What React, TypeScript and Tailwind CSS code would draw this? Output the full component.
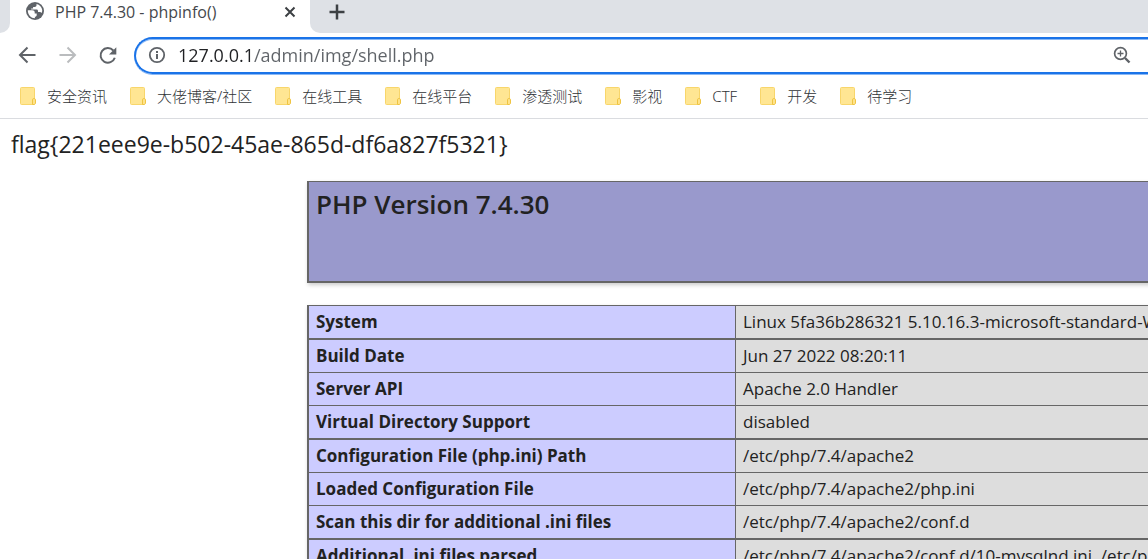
const bookmarks = ["安全资讯", "大佬博客/社区", "在线工具", "在线平台", "渗透测试", "影视", "CTF", "开发", "待学习"];

type Row = { name: string; value: string; heavy?: boolean };

const rows: Row[] = [
  { name: "System", value: "Linux 5fa36b286321 5.10.16.3-microsoft-standard-WSL2", heavy: true },
  { name: "Build Date", value: "Jun 27 2022 08:20:11" },
  { name: "Server API", value: "Apache 2.0 Handler" },
  { name: "Virtual Directory Support", value: "disabled", heavy: true },
  { name: "Configuration File (php.ini) Path", value: "/etc/php/7.4/apache2" },
  { name: "Loaded Configuration File", value: "/etc/php/7.4/apache2/php.ini" },
  { name: "Scan this dir for additional .ini files", value: "/etc/php/7.4/apache2/conf.d", heavy: true },
  { name: "Additional .ini files parsed", value: "/etc/php/7.4/apache2/conf.d/10-mysqlnd.ini, /etc/php/7.4/apache2/conf.d/10-opcache.ini" },
];

function GlobeIcon() {
  return (
    <svg width="20" height="20" viewBox="0 0 20 20" aria-hidden="true">
      <circle cx="10" cy="10" r="9" fill="#5f6368" />
      <path
        d="M2.8 9.2h4.4c1.6 0 2.5.9 2.5 2.1v1.1h2v1.9c0 .9-.8 1.5-1.8 1.5v1.4C6 17.200 2.800 13.700 2.800 9.200zM11.500 2.900v1.300c0 1-.8 1.700-1.800 1.700H8.100v1.700H6.200v.8h5.300c1 0 1.500.7 1.500 1.500v1h1.600c.9 0 1.500.5 1.800 1.200.8-1 .9-2 .8-3-.3-3-2.500-5.500-5.700-6.200z"
        fill="#fff"
      />
    </svg>
  );
}

function BackIcon() {
  return (
    <svg width="24" height="24" viewBox="0 0 24 24" fill="none" stroke="currentColor" strokeWidth="2" aria-hidden="true">
      <path d="M19.500 11H5M11.500 3.500L4 11l7.500 7.500" />
    </svg>
  );
}

function ForwardIcon() {
  return (
    <svg width="24" height="24" viewBox="0 0 24 24" fill="none" stroke="currentColor" strokeWidth="2" aria-hidden="true">
      <path d="M3.500 11H18M11.500 3.500L19 11l-7.500 7.500" />
    </svg>
  );
}

function ReloadIcon() {
  return (
    <svg width="24" height="24" viewBox="0 0 24 24" aria-hidden="true">
      <path d="M18.800 13.700A7.300 7.300 0 1 1 17.300 6.500" fill="none" stroke="currentColor" strokeWidth="2" />
      <path d="M20.300 3.200v7.300H13z" fill="currentColor" />
    </svg>
  );
}

function InfoIcon() {
  return (
    <svg width="18" height="18" viewBox="0 0 18 18" aria-hidden="true">
      <circle cx="9" cy="9" r="7.200" fill="none" stroke="currentColor" strokeWidth="1.800" />
      <path d="M8 8h2v5H8zM8 5h2v1.900H8z" fill="currentColor" />
    </svg>
  );
}

function ZoomIcon() {
  return (
    <svg width="18" height="18" viewBox="0 0 18 18" fill="none" stroke="currentColor" aria-hidden="true">
      <circle cx="7.500" cy="7.500" r="5.900" strokeWidth="1.700" />
      <path d="M12 12l4.500 4.500" strokeWidth="2.400" />
      <path d="M4.500 7.500h6M7.500 4.500v6" strokeWidth="1.300" />
    </svg>
  );
}

function FolderIcon() {
  return (
    <svg width="16" height="18" viewBox="0 0 16 18" aria-hidden="true">
      <rect x=".5" y=".5" width="14" height="17" rx="1" fill="#ffe693" stroke="#f8d66b" />
      <path d="M12.500 17.500v-4.700c0-.7.500-1.300 1.300-1.300h.4c.7 0 1.300.6 1.300 1.300v3.200c0 .9-.7 1.500-1.500 1.500z" fill="#ffe38a" stroke="#efc443" />
    </svg>
  );
}

export default function App() {
  return (
    <div className="min-h-screen overflow-hidden bg-white font-['Open_Sans','Noto_Sans_CJK_SC',sans-serif] text-[#222]">
      <header className="border-b border-[#dadce0]">
        <div className="flex h-[33px] bg-white">
          <div className="w-[10px] rounded-br-[10px] bg-[#dee1e6]" />
          <div className="flex w-[300px] items-start pl-[15px] pr-[10px]">
            <span className="pt-px">
              <GlobeIcon />
            </span>
            <span className="ml-[10px] flex-1 text-[16px] leading-6 text-[#45484c]">PHP 7.4.30 - phpinfo()</span>
            <button type="button" aria-label="Close tab" className="flex h-6 w-5 items-center justify-center text-[#3c4043]">
              <svg width="12" height="12" viewBox="0 0 12 12" stroke="currentColor" strokeWidth="2" aria-hidden="true">
                <path d="M1.500 1.500l9 9M10.500 1.500l-9 9" />
              </svg>
            </button>
          </div>
          <div className="flex-1 rounded-bl-[10px] bg-[#dee1e6] pl-[17px]">
            <button type="button" aria-label="New tab" className="flex h-6 w-5 items-center justify-center text-[#3c4043]">
              <svg width="16" height="16" viewBox="0 0 16 16" stroke="currentColor" strokeWidth="2.500" aria-hidden="true">
                <path d="M8 .5v15M.5 8h15" />
              </svg>
            </button>
          </div>
        </div>

        <div className="flex items-center gap-[14px] pl-4 pt-1 text-[#5f6368]">
          <div className="flex items-center gap-4">
            <button type="button" aria-label="Back">
              <BackIcon />
            </button>
            <button type="button" aria-label="Forward" className="text-[#babcbe]">
              <ForwardIcon />
            </button>
            <button type="button" aria-label="Reload">
              <ReloadIcon />
            </button>
          </div>
          <div className="flex h-[37px] flex-1 items-center rounded-l-full border-2 border-r-0 border-[#1a73e8] pb-px pl-3 pr-[17px] shadow-[0_1px_0_#8ab8f5,inset_0_1px_0_#8ab8f5]">
            <InfoIcon />
            <input
              aria-label="Address"
              defaultValue="127.0.0.1/admin/img/shell.php"
              className="ml-3 min-w-0 flex-1 bg-[linear-gradient(90deg,#202124_75px,#5f6368_75px)] bg-clip-text text-[18px] leading-7 text-transparent caret-[#202124] outline-none"
            />
            <button type="button" aria-label="Zoom">
              <ZoomIcon />
            </button>
          </div>
        </div>

        <nav aria-label="Bookmarks" className="flex h-11 items-center gap-[23px] pl-5 font-['Noto_Sans','Noto_Sans_CJK_SC',sans-serif]">
          {bookmarks.map((label) => (
            <a key={label} href="#" className="flex items-center gap-[11px] whitespace-nowrap text-[15px] font-light leading-6 text-[#303336]">
              <FolderIcon />
              {label}
            </a>
          ))}
        </nav>
      </header>

      <main className="overflow-hidden">
        <p className="pl-[11px] pt-[9px] text-[23px] leading-8">flag{"{221eee9e-b502-45ae-865d-df6a827f5321}"}</p>

        <div className="mt-[21px] flex flex-col gap-[22px] pl-[307px]">
          <div className="h-[102px] w-[1168px] border-b-2 border-l-2 border-r border-t border-[#666] bg-[#9999cc] px-[7px] pt-1 shadow-[1px_2px_4px_#ccc]">
            <h1 className="text-[26px] font-semibold leading-9">PHP Version 7.4.30</h1>
          </div>

          <table className="w-[1168px] table-fixed border-separate border-spacing-0 border-l-2 border-t border-[#666] text-[17px] leading-8 shadow-[1px_2px_4px_#ccc]">
            <colgroup>
              <col className="w-[426px]" />
              <col />
            </colgroup>
            <tbody>
              {rows.map((row) => (
                <tr key={row.name}>
                  <th
                    scope="row"
                    className={`${row.heavy ? "border-b-2" : "border-b"} truncate border-[#666] bg-[#ccccff] px-[7px] text-left font-bold`}
                  >
                    {row.name}
                  </th>
                  <td className={`${row.heavy ? "border-b-2" : "border-b"} truncate border-l border-[#666] bg-[#dddddd] px-[7px]`}>
                    {row.value}
                  </td>
                </tr>
              ))}
            </tbody>
          </table>
        </div>
      </main>
    </div>
  );
}
